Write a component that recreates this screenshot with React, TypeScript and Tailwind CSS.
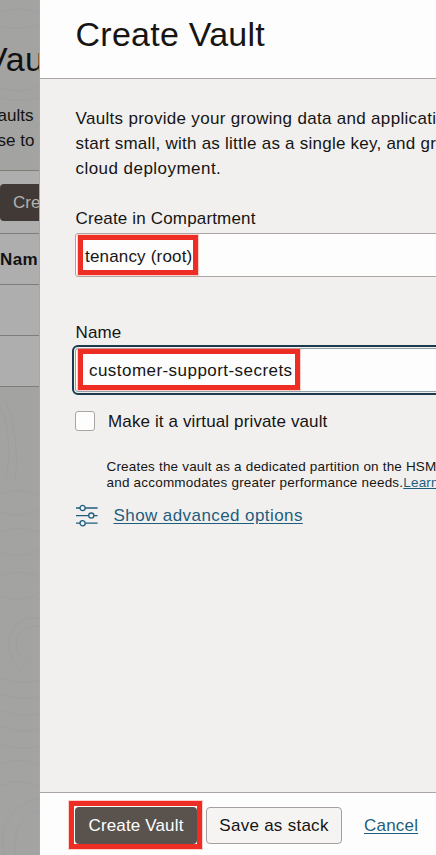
import React from "react";

function Highlight({ className }: { className: string }) {
  return (
    <span
      className={`pointer-events-none absolute border-[5px] border-[#ee2e24] shadow-[0_0_0_1px_rgba(255,150,140,0.45)] ${className}`}
    />
  );
}

function Backdrop() {
  return (
    <div className="relative h-full w-[39px] shrink-0 overflow-hidden bg-[#a3a3a2] text-[17px] text-[#131211]">
      <svg
        className="absolute inset-0 h-full w-full"
        viewBox="0 0 39 855"
        fill="none"
        stroke="#9d9d9d"
        strokeWidth="1"
        opacity="0.5"
      >
        <path d="M0 12q20-6 39 1M0 26q18 6 39-2M0 88q20 6 39-1M0 98q20 4 39 0" />
        <path d="M0 406q14 30 6 74M5 398q16 40 10 84M0 494q20-8 39 2M0 512q20 7 39-2M0 532q18-7 39 0M0 552q20 8 39-2M0 576q20-8 39 1M0 596q20 8 39-3" />
        <path d="M39 618C8 614-2 650 22 672M39 626C14 624 8 650 30 664M0 678q18 8 39 2M0 694q18 7 39 3M0 710q18 8 39 4M0 726q18 8 39 3M0 744q18 8 39 2M0 764q20-8 39 2M0 786q20-10 39 2M4 855c-6-30 8-50 35-56M16 855c-4-24 6-38 23-44" />
      </svg>
      <div className="relative flex h-full flex-col whitespace-nowrap">
        <div className="flex h-[170px] flex-col">
          <div className="mt-[38px] -ml-[15px] h-[42px] text-[34px] leading-[42px] tracking-[0.5px]">Vau</div>
          <div className="mt-[23px] flex flex-col leading-[25px]">
            <span className="-ml-[2.5px]">aults</span>
            <span className="-ml-[2.5px]">se to</span>
          </div>
        </div>
        <div className="flex h-[64px] flex-col border-y border-[#7f7c7a] bg-[#aeaeae] pt-[13px]">
          <div className="h-[37px] w-[60px] rounded bg-[#403936] pl-[13px] leading-[38px] text-[#b5b2b0]">
            Cre
          </div>
        </div>
        <div className="h-[51px] border-b border-[#7f7c7a] bg-[#aeaeae] font-bold leading-[51px] tracking-[0.4px]">Nam</div>
        <div className="h-[51px] border-b border-[#7f7c7a] bg-[#aeaeae]" />
        <div className="h-[51px] border-b border-[#7f7c7a] bg-[#aeaeae]" />
      </div>
    </div>
  );
}

function OptionsIcon() {
  return (
    <svg className="h-6 w-6 shrink-0" viewBox="0 0 24 24" fill="none" stroke="#1f5d7c" strokeWidth="1.3">
      <path d="M1 5h4M10.2 5H22.6M1 12.6h12.7M18.9 12.6h3.7M1 20.2h4M10.2 20.2H22.6" />
      <circle cx="7.6" cy="5" r="2.6" />
      <circle cx="16.3" cy="12.6" r="2.6" />
      <circle cx="7.6" cy="20.2" r="2.6" />
    </svg>
  );
}

export default function App() {
  return (
    <div className="flex h-[855px] w-[436px] overflow-hidden font-['Liberation_Sans',Arial,sans-serif] text-[17px] text-[#161513]">
      <Backdrop />
      <div className="flex h-full min-w-0 flex-1 flex-col overflow-hidden whitespace-nowrap border-l border-[#aaa6a4] bg-[#f1f0ef]">
        <header className="h-[79px] shrink-0 border-b border-[#aca6a4] bg-[#fdfdfd] pl-[35.5px] pt-[13px]">
          <h1 className="text-[34px] leading-[42px] tracking-[0.25px]">Create Vault</h1>
        </header>
        <main className="flex min-h-0 flex-1 flex-col pl-[35px]">
          <p className="mt-[27px] pl-[0.5px] leading-[25px]">
            <span className="tracking-[0.31px]">Vaults provide your growing data and applicati</span>
            <br />
            <span className="tracking-[0.24px]">start small, with as little as a single key, and gr</span>
            <br />
            <span className="tracking-[0.46px]">cloud deployment.</span>
          </p>
          <label className="mt-[25px] pl-[0.5px] leading-[25px] tracking-[0.16px]">Create in Compartment</label>
          <div className="relative mt-[2px] h-[44px] w-[420px] rounded-[3px] border border-[#aca6a4] bg-[#fdfdfd] pl-[9px] leading-[45px] tracking-[0.18px]">
            tenancy (root)
            <Highlight className="left-[2px] top-px h-[40px] w-[120px]" />
          </div>
          <label className="mt-[43px] pl-[0.5px] leading-[25px] tracking-[0.1px]">Name</label>
          <div className="relative mt-[3px] h-[44px] w-[420px] rounded-[3px] border border-[#8fa0a8] bg-[#fdfdfd] pl-[13px] leading-[43px] tracking-[0.45px] outline-2 outline-offset-1 outline-[#1b3a4b]">
            customer-support-secrets
            <Highlight className="top-0 left-[2px] h-[41px] w-[222px]" />
          </div>
          <div className="mt-[19px] flex h-5 items-center">
            <span className="h-5 w-5 rounded-[3px] border border-[#aaa5a3] bg-[#fdfdfd]" />
            <span className="ml-[13px] pt-[2px] leading-5 tracking-[0.13px]">Make it a virtual private vault</span>
          </div>
          <p className="ml-[31.5px] mt-[28px] text-[13.5px] leading-[16px] tracking-[0.18px]">
            Creates the vault as a dedicated partition on the HSM
            <br />
            <span className="tracking-[0.2px]">and accommodates greater performance needs.</span>
            <a className="text-[#1f5d7c] underline">Learn</a>
          </p>
          <div className="mt-[12px] flex h-6 items-center">
            <OptionsIcon />
            <a className="ml-[14.5px] pt-[2px] tracking-[0.42px] text-[#1f5d7c] underline underline-offset-2">Show advanced options</a>
          </div>
        </main>
        <footer className="flex h-[63px] shrink-0 items-center border-t border-[#aca6a4] bg-[#fdfdfd] pl-[35px] pt-[2px]">
          <div className="relative h-[37px] w-[122px] rounded-[4px] bg-[#5a524d] text-center leading-[37px] tracking-[0.15px] text-white">
            Create Vault
            <Highlight className="-left-[6px] -top-[6px] h-[48px] w-[133px]" />
          </div>
          <div className="ml-[9px] h-[37px] w-[136px] rounded-[4px] border border-[#a5a09e] bg-[#f5f4f2] text-center leading-[35px] tracking-[0.27px]">
            Save as stack
          </div>
          <a className="ml-[22px] pt-[2px] tracking-[0.2px] text-[#1f5d7c] underline underline-offset-2">Cancel</a>
        </footer>
      </div>
    </div>
  );
}
